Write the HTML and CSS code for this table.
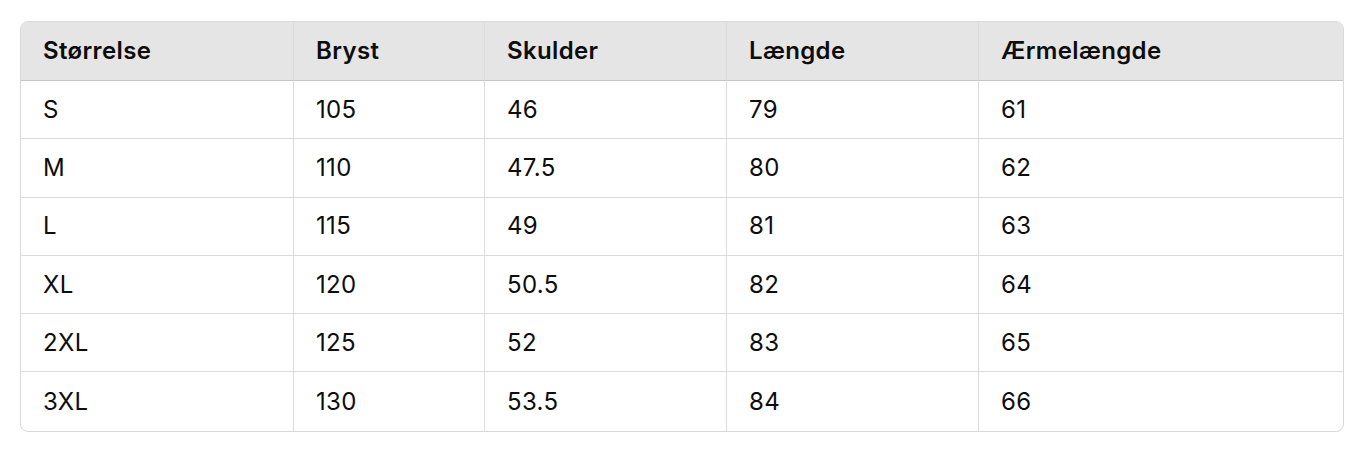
FILE: index.html
```html
<!DOCTYPE html>
<html lang="da">
<head>
<meta charset="utf-8">
<title>Størrelsesguide</title>
<link rel="stylesheet" href="styles.css">
</head>
<body>
<div class="wrap">
  <table class="sizes">
    <colgroup>
      <col class="c1"><col class="c2"><col class="c3"><col class="c4"><col class="c5">
    </colgroup>
    <thead>
      <tr><th>Størrelse</th><th>Bryst</th><th>Skulder</th><th>Længde</th><th>Ærmelængde</th></tr>
    </thead>
    <tbody>
      <tr><td>S</td><td>105</td><td>46</td><td>79</td><td>61</td></tr>
      <tr><td>M</td><td>110</td><td>47.5</td><td>80</td><td>62</td></tr>
      <tr><td>L</td><td>115</td><td>49</td><td>81</td><td>63</td></tr>
      <tr><td>XL</td><td>120</td><td>50.5</td><td>82</td><td>64</td></tr>
      <tr><td>2XL</td><td>125</td><td>52</td><td>83</td><td>65</td></tr>
      <tr><td>3XL</td><td>130</td><td>53.5</td><td>84</td><td>66</td></tr>
    </tbody>
  </table>
</div>
</body>
</html>
```
FILE: styles.css
```css
html, body { margin: 0; padding: 0; background: #fff; }
body { font-family: Inter, "Noto Sans", sans-serif; color: #0d0d0d; }
.wrap { padding: 21px 23px 0 20px; }
.sizes {
  width: 1324px;
  border-collapse: separate;
  border-spacing: 0;
  table-layout: fixed;
  border: 1px solid #d9d9d9;
  border-radius: 8px;
  overflow: hidden;
  font-size: 24px;
  letter-spacing: 0.35px;
}
.c1 { width: 273px; }
.c2 { width: 191px; }
.c3 { width: 242px; }
.c4 { width: 252px; }
.c5 { width: auto; }
th, td {
  text-align: left;
  padding: 0 22px;
  height: 58.3px;
  box-sizing: border-box;
  border-right: 1px solid #dcdcdc;
  border-bottom: 1px solid #dcdcdc;
  line-height: 28px;
}
th:last-child, td:last-child { border-right: none; }
tbody tr:last-child td { border-bottom: none; }
th {
  background: #e5e5e5;
  font-weight: 600;
  border-bottom-color: #c6c6c6;
  height: 59px;
}
td { font-weight: 400; }
```
